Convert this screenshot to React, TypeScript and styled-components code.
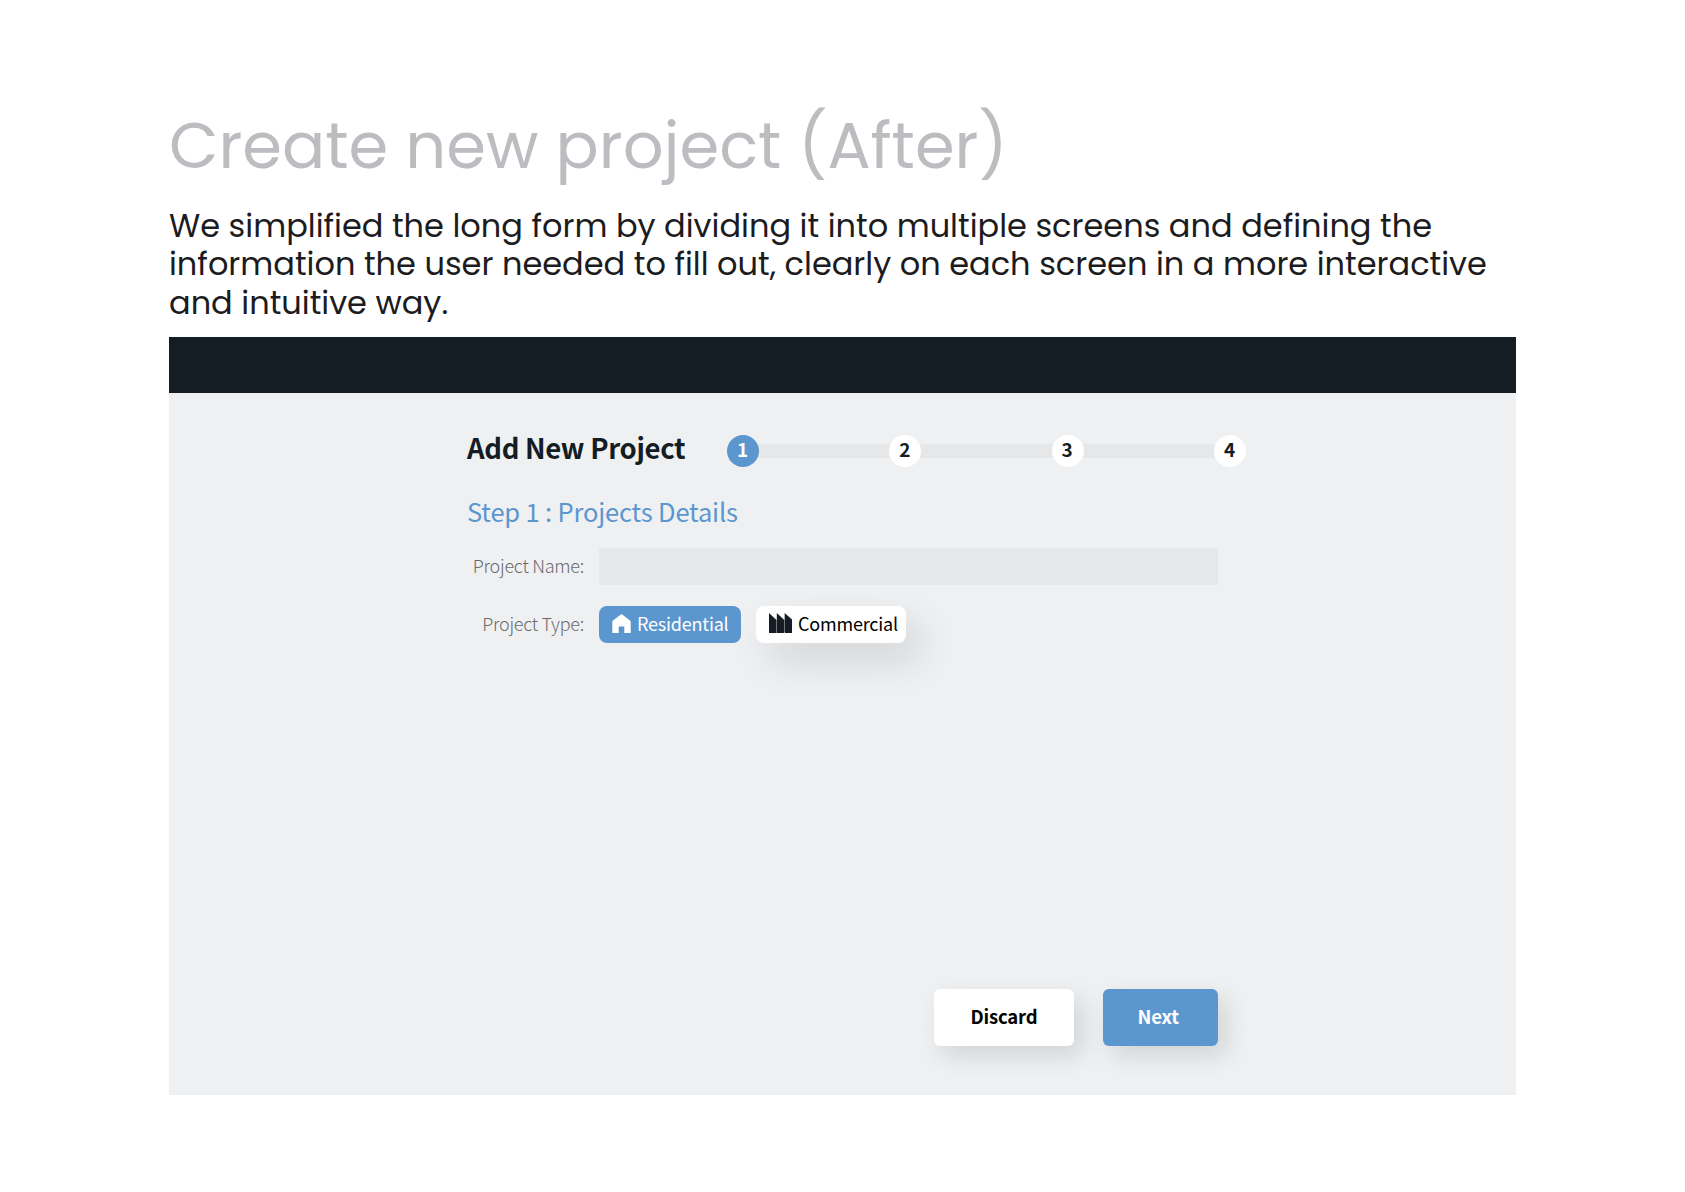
import React, { useState } from 'react';
import styled, { createGlobalStyle } from 'styled-components';

const colors = {
  navy: '#141c24',
  blue: '#5b96cf',
  panelBg: '#eff0f2',
  track: '#e6e7e9',
  heading: '#bcbdc0',
  body: '#1c1b1d',
  label: '#6a6a6c',
};

const headingFont = `Poppins, Inter, 'Open Sans', sans-serif`;
const uiFont = `'Noto Sans CJK SC', 'Noto Sans', sans-serif`;

const BaseStyles = createGlobalStyle`
  * {
    box-sizing: border-box;
  }

  body {
    margin: 0;
    background: #fff;
  }

  button,
  input {
    border: 0;
    font-family: inherit;
  }
`;

const Page = styled.div`
  display: flex;
  flex-direction: column;
  width: 1685px;
  height: 1192px;
  padding: 98px 169px 97px;
`;

const Title = styled.h1`
  margin: 0;
  height: 106px;
  color: ${colors.heading};
  font: 400 64px/96px ${headingFont};
  white-space: nowrap;
`;

const Intro = styled.p`
  margin: 0;
  height: 133px;
  padding-top: 3px;
  color: ${colors.body};
  font: 400 32px/38.4px ${headingFont};
`;

const Panel = styled.section`
  display: flex;
  flex: 1;
  flex-direction: column;
  width: 1347px;
  background: ${colors.panelBg};
  font-family: ${uiFont};
`;

const TopBar = styled.header`
  height: 56px;
  background: ${colors.navy};
`;

const Form = styled.main`
  display: flex;
  flex: 1;
  flex-direction: column;
  width: 1078px;
  padding: 42px 0 49px 298px;
`;

const FormHeader = styled.div`
  display: flex;
  align-items: center;
  height: 32px;
`;

const FormTitle = styled.h2`
  flex: none;
  width: 260px;
  margin: -9px 0 0;
  color: ${colors.navy};
  font-size: 27.5px;
  font-weight: 600;
  letter-spacing: -0.32px;
  line-height: 40px;
  white-space: nowrap;
`;

const Stepper = styled.ol`
  display: flex;
  flex: none;
  align-items: center;
  width: 519px;
  margin: 0;
  padding: 0;
  list-style: none;
`;

const Step = styled.li`
  display: flex;
  flex: 1;
  align-items: center;

  &:last-child {
    flex: none;
  }

  &:not(:last-child)::after {
    content: '';
    flex: 1;
    height: 14px;
    margin: 0 -1px;
    background: ${colors.track};
  }
`;

const StepDot = styled.span<{ $active: boolean }>`
  z-index: 1;
  display: flex;
  align-items: center;
  justify-content: center;
  width: 32px;
  height: 32px;
  padding: 0 1px 4px 0;
  border-radius: 50%;
  background: ${({ $active }) => ($active ? colors.blue : '#fff')};
  color: ${({ $active }) => ($active ? '#fff' : colors.navy)};
  font-size: 19px;
  font-weight: 600;
  line-height: 28px;
`;

const StepTitle = styled.h3`
  margin: 25px 0 0;
  height: 56px;
  color: ${colors.blue};
  font-size: 25.5px;
  font-weight: 400;
  letter-spacing: -0.17px;
  line-height: 38px;
  white-space: nowrap;
`;

const Field = styled.div`
  display: flex;
  align-items: center;
  height: 37px;
  margin-bottom: 20.5px;
`;

const Label = styled.label`
  flex: none;
  width: 117px;
  margin-right: 15px;
  padding-bottom: 3px;
  color: ${colors.label};
  font-size: 18px;
  font-weight: 300;
  letter-spacing: -0.25px;
  line-height: 26px;
  text-align: right;
  white-space: nowrap;
`;

const TextInput = styled.input`
  width: 619px;
  height: 37px;
  padding: 0 12px;
  border-radius: 2px;
  background: ${colors.track};
  font-size: 18px;
  outline: none;
`;

const TypeButton = styled.button<{ $selected: boolean; $width: number }>`
  display: flex;
  align-items: center;
  width: ${({ $width }) => $width}px;
  height: 37px;
  margin-right: 14.5px;
  padding: 0 0 2px 13px;
  border-radius: 8px;
  background: ${({ $selected }) => ($selected ? colors.blue : '#fff')};
  box-shadow: ${({ $selected }) => ($selected ? 'none' : '14px 18px 38px rgba(0, 0, 0, 0.12)')};
  color: ${({ $selected }) => ($selected ? '#fff' : '#000')};
  font-size: 18px;
  font-weight: 400;
  letter-spacing: -0.2px;
  line-height: 34px;
  white-space: nowrap;

  svg {
    flex: none;
    margin-right: 6px;
  }
`;

const Actions = styled.footer`
  display: flex;
  justify-content: flex-end;
  gap: 28.5px;
  margin: auto 29px 0 0;
`;

const ActionButton = styled.button<{ $primary?: boolean }>`
  width: ${({ $primary }) => ($primary ? 115.5 : 140)}px;
  height: 57px;
  padding: ${({ $primary }) => ($primary ? '0 4px 3px 0' : '0 0 3px')};
  border-radius: 6px;
  background: ${({ $primary }) => ($primary ? colors.blue : '#fff')};
  box-shadow: 8px 10px 24px rgba(0, 0, 0, 0.12);
  color: ${({ $primary }) => ($primary ? '#fff' : '#000')};
  font-size: 18.5px;
  font-weight: 600;
  letter-spacing: -0.15px;
`;

const HomeIcon = () => (
  <svg width="19" height="19" viewBox="0 0 19 19" fill="currentColor">
    <path d="M9.5 0 L18 6.5 Q18.7 7 18.7 8 V19 H12.3 V12.6 H6.7 V19 H0.3 V8 Q0.3 7 1 6.5 Z" />
  </svg>
);

const FactoryIcon = () => (
  <svg width="23.5" height="20" viewBox="0 0 24 20" fill={colors.navy} preserveAspectRatio="none">
    <path d="M0 0 L7.6 7 V20 H0 Z M8 0 L15.6 7 V20 H8 Z M16 0 L24 7 V20 H16 Z" />
  </svg>
);

const steps = [1, 2, 3, 4];

const App: React.FC = () => {
  const [projectType, setProjectType] = useState('residential');
  const currentStep = 1;

  return (
    <>
      <BaseStyles />
      <Page>
        <Title>Create new project (After)</Title>
        <Intro>
          We simplified the long form by dividing it into multiple screens and defining the information the user
          needed to fill out, clearly on each screen in a more interactive and intuitive way.
        </Intro>
        <Panel>
          <TopBar />
          <Form>
            <FormHeader>
              <FormTitle>Add New Project</FormTitle>
              <Stepper>
                {steps.map(step => (
                  <Step key={step}>
                    <StepDot $active={step === currentStep}>{step}</StepDot>
                  </Step>
                ))}
              </Stepper>
            </FormHeader>
            <StepTitle>Step 1 : Projects Details</StepTitle>
            <Field>
              <Label htmlFor="project-name">Project Name:</Label>
              <TextInput id="project-name" />
            </Field>
            <Field>
              <Label>Project Type:</Label>
              <TypeButton
                $width={142}
                $selected={projectType === 'residential'}
                onClick={() => setProjectType('residential')}
              >
                <HomeIcon />
                Residential
              </TypeButton>
              <TypeButton
                $width={150}
                $selected={projectType === 'commercial'}
                onClick={() => setProjectType('commercial')}
              >
                <FactoryIcon />
                Commercial
              </TypeButton>
            </Field>
            <Actions>
              <ActionButton>Discard</ActionButton>
              <ActionButton $primary>Next</ActionButton>
            </Actions>
          </Form>
        </Panel>
      </Page>
    </>
  );
};

export default App;
